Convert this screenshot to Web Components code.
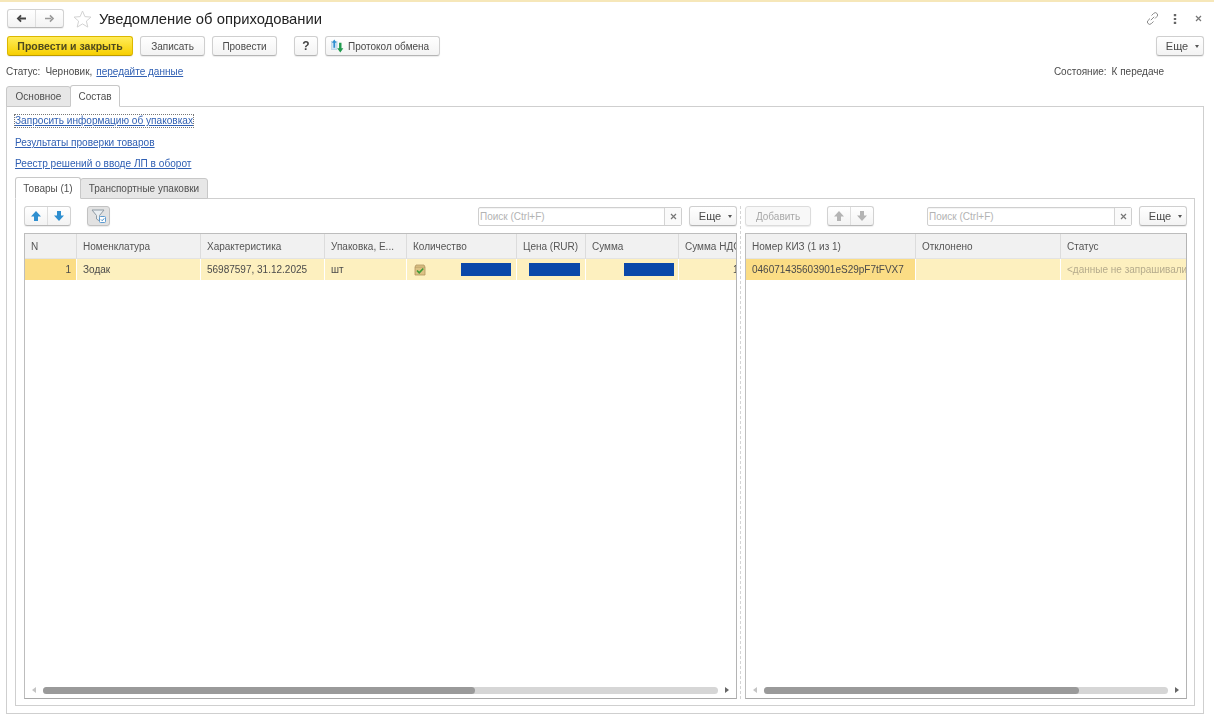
<!DOCTYPE html>
<html lang="ru">
<head>
<meta charset="utf-8">
<title>Уведомление об оприходовании</title>
<style>
html,body{margin:0;padding:0;background:#fff;}
body{font:10px "Liberation Sans",Arial,sans-serif;color:#4a4a4a;overflow:hidden;}
</style>
</head>
<body>
<doc-form></doc-form>

<script>
const ICONS = {
    back:`<svg width="11" height="9" viewBox="0 0 12 10"><path d="M11 5H4M5.500 1.500L2 5l3.500 3.500" fill="none" stroke="#444" stroke-width="2"/></svg>`,
    forward:`<svg width="11" height="9" viewBox="0 0 12 10"><path d="M1 5h7M6.500 1.500L10 5 6.500 8.500" fill="none" stroke="#999" stroke-width="1.700"/></svg>`,
    star:`<svg width="19" height="18" viewBox="0 0 19 18"><path d="M9.500 1l2.400 5.600 6.100.5-4.600 4 1.400 6-5.300-3.200L4.200 17.100l1.400-6-4.600-4 6.100-.5z" fill="#fff" stroke="#d2d2d2"/></svg>`,
    link:`<svg width="13" height="13" viewBox="0 0 13 13"><path d="M5.500 3.500L7.700 1.400a2.200 2.200 0 0 1 3.200 0 2.200 2.200 0 0 1 0 3.200L9 6.500M7.500 9.500l-2.200 2.100a2.200 2.200 0 0 1-3.200 0 2.200 2.200 0 0 1 0-3.200L4 6.500M4.800 8.200l3.400-3.400" fill="none" stroke="#8a8a8a"/></svg>`,
    dots:`<svg width="4" height="10" viewBox="0 0 4 10"><path d="M.8 0h2.400v2.200H.8zM.8 3.900h2.400v2.200H.8zM.8 7.800h2.400V10H.8z" fill="#666"/></svg>`,
    close:`<svg width="7" height="7" viewBox="0 0 7 7"><path d="M1 1l5 5M6 1L1 6" stroke="#777" stroke-width="1.200"/></svg>`,
    up:`<svg width="12" height="12" viewBox="0 0 12 12"><path d="M6 1L1 6.500h3V11h4V6.500h3z" fill="#2f8fd0"/></svg>`,
    down:`<svg width="12" height="12" viewBox="0 0 12 12"><path d="M6 11l5-5.500H8V1H4v4.500H1z" fill="#2f8fd0"/></svg>`,
    upoff:`<svg width="12" height="12" viewBox="0 0 12 12"><path d="M6 1L1 6.500h3V11h4V6.500h3z" fill="#b4b4b4"/></svg>`,
    downoff:`<svg width="12" height="12" viewBox="0 0 12 12"><path d="M6 11l5-5.500H8V1H4v4.500H1z" fill="#b4b4b4"/></svg>`,
    filter:`<svg width="16" height="15" viewBox="0 0 16 15"><path d="M1 1h12L8.500 6.500V12L5.500 10V6.500z" fill="#e9eef2" stroke="#8f9aa3"/><rect x="8.500" y="7.500" width="6" height="6" rx="1" fill="#fff" stroke="#5c9bd1"/><path d="M10 10.500l1.200 1.200 2-2.300" fill="none" stroke="#3a85c4"/></svg>`,
    exchange:`<svg width="13" height="14" viewBox="0 0 14 14"><rect x="0.500" y="2" width="6" height="9" fill="#cfe3f3" stroke="#a9c6de" stroke-width=".6"/><path d="M3.500 0L1 3.500h1.600V9h1.800V3.500H6z" fill="#2f8fd0"/><path d="M10 14l3.300-4.500h-2V3.500H8.700v6h-2z" fill="#1f9a4d"/></svg>`,
    checkdoc:`<svg width="12" height="12" viewBox="0 0 12 12"><path d="M1 3l1-2h8l1 2v8H1z" fill="#dcc284" stroke="#b09560" stroke-width=".8"/><path d="M1 3.200h10" stroke="#b09560" stroke-width=".6"/><path d="M3 6.500L5.200 8.800 9.300 4.500" fill="none" stroke="#3f9b36" stroke-width="1.700"/></svg>`,
    arrowleft:`<svg width="4" height="6" viewBox="0 0 4 6"><path d="M4 0v6L0 3z" fill="#c4c4c4"/></svg>`,
    arrowright:`<svg width="4" height="6" viewBox="0 0 4 6"><path d="M0 0v6l4-3z" fill="#666"/></svg>`
};

class OneButton extends HTMLElement{
    constructor(){
        super();
        this.selector = this.attachShadow({mode:"open"});
    }

    connectedCallback(){
        const w = this.getAttribute("w");
        this.selector.innerHTML = `
        <style>
            :host{display:inline-flex;flex:none;height:20px;box-sizing:border-box;}
            .btn{flex:1;display:flex;align-items:center;justify-content:center;gap:4px;box-sizing:border-box;
                border:1px solid #cfcfcf;border-bottom-color:#b5b5b5;border-radius:3px;
                background:linear-gradient(#fff,#f3f3f3);color:#4a4a4a;white-space:nowrap;
                box-shadow:0 1px 1px rgba(0,0,0,.08);font:10px "Liberation Sans",Arial,sans-serif;}
            :host([kind=primary]) .btn{background:linear-gradient(#ffec5a,#f7cf00);border-color:#dcb800;border-bottom-color:#bd9c00;
                color:#4f4a1e;font-weight:bold;font-size:10.500px;}
            :host([kind=off]) .btn{color:#a8a8a8;background:#f8f8f8;border-color:#dcdcdc;}
            :host([kind=pressed]) .btn{background:#e2e2e2;border-color:#c2c2c2;}
            :host([start]) .btn{justify-content:flex-start;padding-left:5px;}
            :host([more]) .btn{gap:7px;padding-left:5px;font-size:11px;}
            .caret{width:0;height:0;border:2.500px solid transparent;border-top:3px solid #555;border-bottom:0;}
        </style>
        <div class="btn"><slot></slot>${this.hasAttribute("more") ? '<span class="caret"></span>' : ''}</div>`;
        if(w){
            this.style.width = w + "px";
        }
    }
}
customElements.define("one-button",OneButton);

class ButtonPair extends HTMLElement{
    constructor(){
        super();
        this.selector = this.attachShadow({mode:"open"});
    }

    connectedCallback(){
        this.selector.innerHTML = `
        <style>
            :host{display:inline-flex;flex:none;box-sizing:border-box;}
            .pair{display:flex;box-sizing:border-box;width:100%;border:1px solid #d2d2d2;border-bottom-color:#b8b8b8;border-radius:3px;
                background:linear-gradient(#fff,#f3f3f3);box-shadow:0 1px 1px rgba(0,0,0,.07);}
            .half{flex:1;display:flex;align-items:center;justify-content:center;}
            .half + .half{border-left:1px solid #dedede;}
        </style>
        <div class="pair"><div class="half">${ICONS[this.getAttribute("a")]}</div><div class="half">${ICONS[this.getAttribute("b")]}</div></div>`;
        this.style.width = this.getAttribute("w") + "px";
        this.style.height = (this.getAttribute("h") || 20) + "px";
    }
}
customElements.define("button-pair",ButtonPair);

class TabBar extends HTMLElement{
    constructor(){
        super();
        this.selector = this.attachShadow({mode:"open"});
    }

    connectedCallback(){
        const active = this.getAttribute("active");
        const tabs = this.getAttribute("tabs").split("|").map(item=>{
            const [name,width] = item.split(":");
            return `<div class="tab ${name==active ? "active" : ""}" style="width:${width}px">${name}</div>`;
        }).join("");
        this.selector.innerHTML = `
        <style>
            :host{display:block;position:relative;z-index:1;margin-bottom:-1px;}
            .bar{display:flex;align-items:flex-end;height:22px;}
            .tab{box-sizing:border-box;height:21px;display:flex;align-items:center;justify-content:center;white-space:nowrap;
                border:1px solid #c8c8c8;border-radius:3px 3px 0 0;background:#e7e7e7;color:#505050;font-size:10px;margin-right:-1px;}
            .tab.active{height:22px;background:#fff;border-bottom-color:#fff;position:relative;z-index:1;}
        </style>
        <div class="bar">${tabs}</div>`;
    }
}
customElements.define("tab-bar",TabBar);

class SearchBox extends HTMLElement{
    constructor(){
        super();
        this.selector = this.attachShadow({mode:"open"});
    }

    connectedCallback(){
        this.selector.innerHTML = `
        <style>
            :host{display:flex;flex:none;height:19px;margin-top:1px;box-sizing:border-box;border:1px solid #cfcfcf;border-radius:2px;background:#fff;}
            .text{flex:1;padding-left:1px;line-height:17px;color:#b3b3b3;font-size:10px;box-shadow:inset 0 1px 1px rgba(0,0,0,.05);}
            .clear{width:16px;display:flex;align-items:center;justify-content:center;border-left:1px solid #d4d4d4;background:#fafafa;}
        </style>
        <div class="text">Поиск (Ctrl+F)</div><div class="clear">${ICONS.close}</div>`;
        this.style.width = this.getAttribute("w") + "px";
    }
}
customElements.define("search-box",SearchBox);

class ScrollLine extends HTMLElement{
    constructor(){
        super();
        this.selector = this.attachShadow({mode:"open"});
    }

    connectedCallback(){
        this.selector.innerHTML = `
        <style>
            :host{display:grid;grid-template-columns:18px 1fr 18px;align-items:center;height:14px;padding-bottom:2px;box-sizing:border-box;}
            .end{display:flex;justify-content:center;}
            .track{height:7px;border-radius:4px;background:#d6d6d6;}
            .thumb{height:100%;border-radius:4px;background:#9a9a9a;width:${this.getAttribute("thumb")}%;}
        </style>
        <div class="end">${ICONS.arrowleft}</div>
        <div class="track"><div class="thumb"></div></div>
        <div class="end">${ICONS.arrowright}</div>`;
    }
}
customElements.define("scroll-line",ScrollLine);

class GridCell extends HTMLElement{
    constructor(){
        super();
        this.selector = this.attachShadow({mode:"open"});
    }

    connectedCallback(){
        this.selector.innerHTML = `
        <style>
            :host{display:flex;align-items:center;box-sizing:border-box;height:21px;padding:0 5px 0 6px;overflow:hidden;white-space:nowrap;
                background:#fdf0bf;border-right:1px solid #fff;color:#4a4a4a;min-width:0;}
            :host([end]){justify-content:flex-end;}
            :host([current]){background:#fbdd85;}
            :host([muted]){color:#b5ab8c;}
        </style>
        <slot></slot>`;
    }
}
customElements.define("grid-cell",GridCell);

class MaskBlock extends HTMLElement{
    constructor(){
        super();
        this.selector = this.attachShadow({mode:"open"});
        this.selector.innerHTML = `<style>:host{display:block;flex:none;width:50px;height:13px;background:#0a48a9;}</style>`;
    }
}
customElements.define("mask-block",MaskBlock);

class DataGrid extends HTMLElement{
    constructor(){
        super();
        this.selector = this.attachShadow({mode:"open"});
    }

    connectedCallback(){
        const cols = this.getAttribute("cols").split("|").map(item=>item.split(":"));
        const tracks = cols.map(col=>col[1]+"px").join(" ");
        const head = cols.map(col=>`<div class="th">${col[0]}</div>`).join("");
        this.selector.innerHTML = `
        <style>
            :host{display:flex;flex-direction:column;flex:1;min-height:0;box-sizing:border-box;background:#fff;overflow:hidden;
                border:1px solid #c4c4c4;border-color:#bdbdbd #b4b4b4 #a8a8a8 #bdbdbd;}
            .head,.row{display:grid;grid-template-columns:${tracks};flex:none;}
            .th{box-sizing:border-box;height:25px;padding:0 6px;display:flex;align-items:center;white-space:nowrap;overflow:hidden;
                background:#f1f1f1;border-right:1px solid #dcdcdc;border-bottom:1px solid #e3e3e3;color:#555;}
            .body{flex:1;min-height:0;}
        </style>
        <div class="head">${head}</div>
        <div class="body"><div class="row"><slot></slot></div></div>
        <scroll-line thumb="${this.getAttribute("thumb")}"></scroll-line>`;
    }
}
customElements.define("data-grid",DataGrid);

class GoodsPane extends HTMLElement{
    constructor(){
        super();
        this.selector = this.attachShadow({mode:"open"});
        this.selector.innerHTML = `
        <style>
            :host{display:flex;flex-direction:column;min-width:0;min-height:0;}
            .tools{display:flex;align-items:flex-start;height:20px;margin-bottom:7px;flex:none;}
            .grow{flex:1;}
        </style>
        <div class="tools">
            <button-pair w="47" a="up" b="down"></button-pair>
            <one-button w="23" kind="pressed" style="margin-left:16px">${ICONS.filter}</one-button>
            <div class="grow"></div>
            <search-box w="204"></search-box>
            <one-button w="48" more style="margin-left:7px">Еще</one-button>
        </div>
        <data-grid thumb="64" cols="N:52|Номенклатура:124|Характеристика:124|Упаковка, Е...:82|Количество:110|Цена (RUR):69|Сумма:93|Сумма НДС:120">
            <grid-cell end current>1</grid-cell>
            <grid-cell>Зодак</grid-cell>
            <grid-cell>56987597, 31.12.2025</grid-cell>
            <grid-cell>шт</grid-cell>
            <grid-cell style="justify-content:space-between;padding-left:7px">${ICONS.checkdoc}<mask-block></mask-block></grid-cell>
            <grid-cell end><mask-block style="width:51px"></mask-block></grid-cell>
            <grid-cell end style="padding-right:4px"><mask-block></mask-block></grid-cell>
            <grid-cell style="padding-left:54px">1</grid-cell>
        </data-grid>`;
    }
}
customElements.define("goods-pane",GoodsPane);

class CodesPane extends HTMLElement{
    constructor(){
        super();
        this.selector = this.attachShadow({mode:"open"});
        this.selector.innerHTML = `
        <style>
            :host{display:flex;flex-direction:column;min-width:0;min-height:0;}
            .tools{display:flex;align-items:flex-start;height:20px;margin-bottom:7px;flex:none;}
            .grow{flex:1;}
        </style>
        <div class="tools">
            <one-button w="66" kind="off">Добавить</one-button>
            <button-pair w="47" a="upoff" b="downoff" style="margin-left:16px"></button-pair>
            <div class="grow"></div>
            <search-box w="205"></search-box>
            <one-button w="48" more style="margin-left:7px">Еще</one-button>
        </div>
        <data-grid thumb="78" cols="Номер КИЗ (1 из 1):170|Отклонено:145|Статус:170">
            <grid-cell current>046071435603901eS29pF7tFVX7</grid-cell>
            <grid-cell></grid-cell>
            <grid-cell muted>&lt;данные не запрашивались&gt;</grid-cell>
        </data-grid>`;
    }
}
customElements.define("codes-pane",CodesPane);

class DocForm extends HTMLElement{
    constructor(){
        super();
        this.selector = this.attachShadow({mode:"open"});
    }

    connectedCallback(){
        this.selector.innerHTML = `
        <style>
            :host{display:flex;flex-direction:column;height:719px;box-sizing:border-box;border-top:2px solid #f6e7b9;
                font:10px "Liberation Sans",Arial,sans-serif;color:#4a4a4a;filter:blur(.3px);}
            a{color:#2f5fb3;text-decoration:underline;}
            .title{display:flex;align-items:center;height:19px;margin:7px 12px 0 7px;flex:none;}
            .title h1{margin:1px 0 0 7px;font-size:14.800px;font-weight:normal;color:#222;white-space:nowrap;}
            .star{margin-left:9px;display:flex;}
            .grow{flex:1;}
            .sys{display:flex;align-items:center;}
            .commands{display:flex;height:20px;margin:8px 10px 0 7px;flex:none;gap:7px;}
            .status{display:flex;align-items:center;height:18px;margin:6px 50px 0 6px;flex:none;white-space:nowrap;}
            .status .val{margin-left:5px;}
            .status a{margin-left:4px;}
            .outer{margin:5px 10px -1px 6px;flex:none;}
            .panel{flex:1;min-height:0;display:flex;flex-direction:column;box-sizing:border-box;margin:0 10px 5px 6px;
                padding:8px 8px 7px 8px;border:1px solid #cfcfcf;}
            .links{display:flex;flex-direction:column;flex:none;font-size:10.100px;}
            .links a{height:21px;line-height:14px;align-self:flex-start;}
            .links a:last-child{height:20px;}
            .links a.focus{height:12px;line-height:12px;margin-bottom:9px;outline:1px dotted #777;}
            .inner{flex:1;min-height:0;display:flex;flex-direction:column;}
            .sheet{flex:1;min-height:0;box-sizing:border-box;border:1px solid #cfcfcf;padding:7px 7px 6px 8px;
                display:grid;grid-template-columns:713px 8px 1fr;}
            .split{justify-self:start;margin-left:3px;border-left:1px dashed #d4d4d4;}
        </style>
        <div class="title">
            <button-pair w="57" h="19" a="back" b="forward"></button-pair>
            <div class="star">${ICONS.star}</div>
            <h1>Уведомление об оприходовании</h1>
            <div class="grow"></div>
            <div class="sys" style="gap:14px">${ICONS.link}${ICONS.dots}<span style="margin-left:4px;display:flex">${ICONS.close}</span></div>
        </div>
        <div class="commands">
            <one-button w="126" kind="primary">Провести и закрыть</one-button>
            <one-button w="65">Записать</one-button>
            <one-button w="65">Провести</one-button>
            <one-button w="24" style="margin-left:10px"><b style="color:#444;font-size:12px">?</b></one-button>
            <one-button w="115" start>${ICONS.exchange}Протокол обмена</one-button>
            <div class="grow"></div>
            <one-button w="48" more>Еще</one-button>
        </div>
        <div class="status">
            <span>Статус:</span><span class="val">Черновик,</span><a>передайте данные</a>
            <div class="grow"></div>
            <span>Состояние:</span><span class="val">К передаче</span>
        </div>
        <tab-bar class="outer" tabs="Основное:65|Состав:50" active="Состав"></tab-bar>
        <div class="panel">
            <div class="links">
                <a class="focus">Запросить информацию об упаковках</a>
                <a>Результаты проверки товаров</a>
                <a>Реестр решений о вводе ЛП в оборот</a>
            </div>
            <div class="inner">
                <tab-bar tabs="Товары (1):66|Транспортные упаковки:128" active="Товары (1)"></tab-bar>
                <div class="sheet">
                    <goods-pane></goods-pane>
                    <div class="split"></div>
                    <codes-pane></codes-pane>
                </div>
            </div>
        </div>`;
    }
}
customElements.define("doc-form",DocForm);
</script>
</body>
</html>
